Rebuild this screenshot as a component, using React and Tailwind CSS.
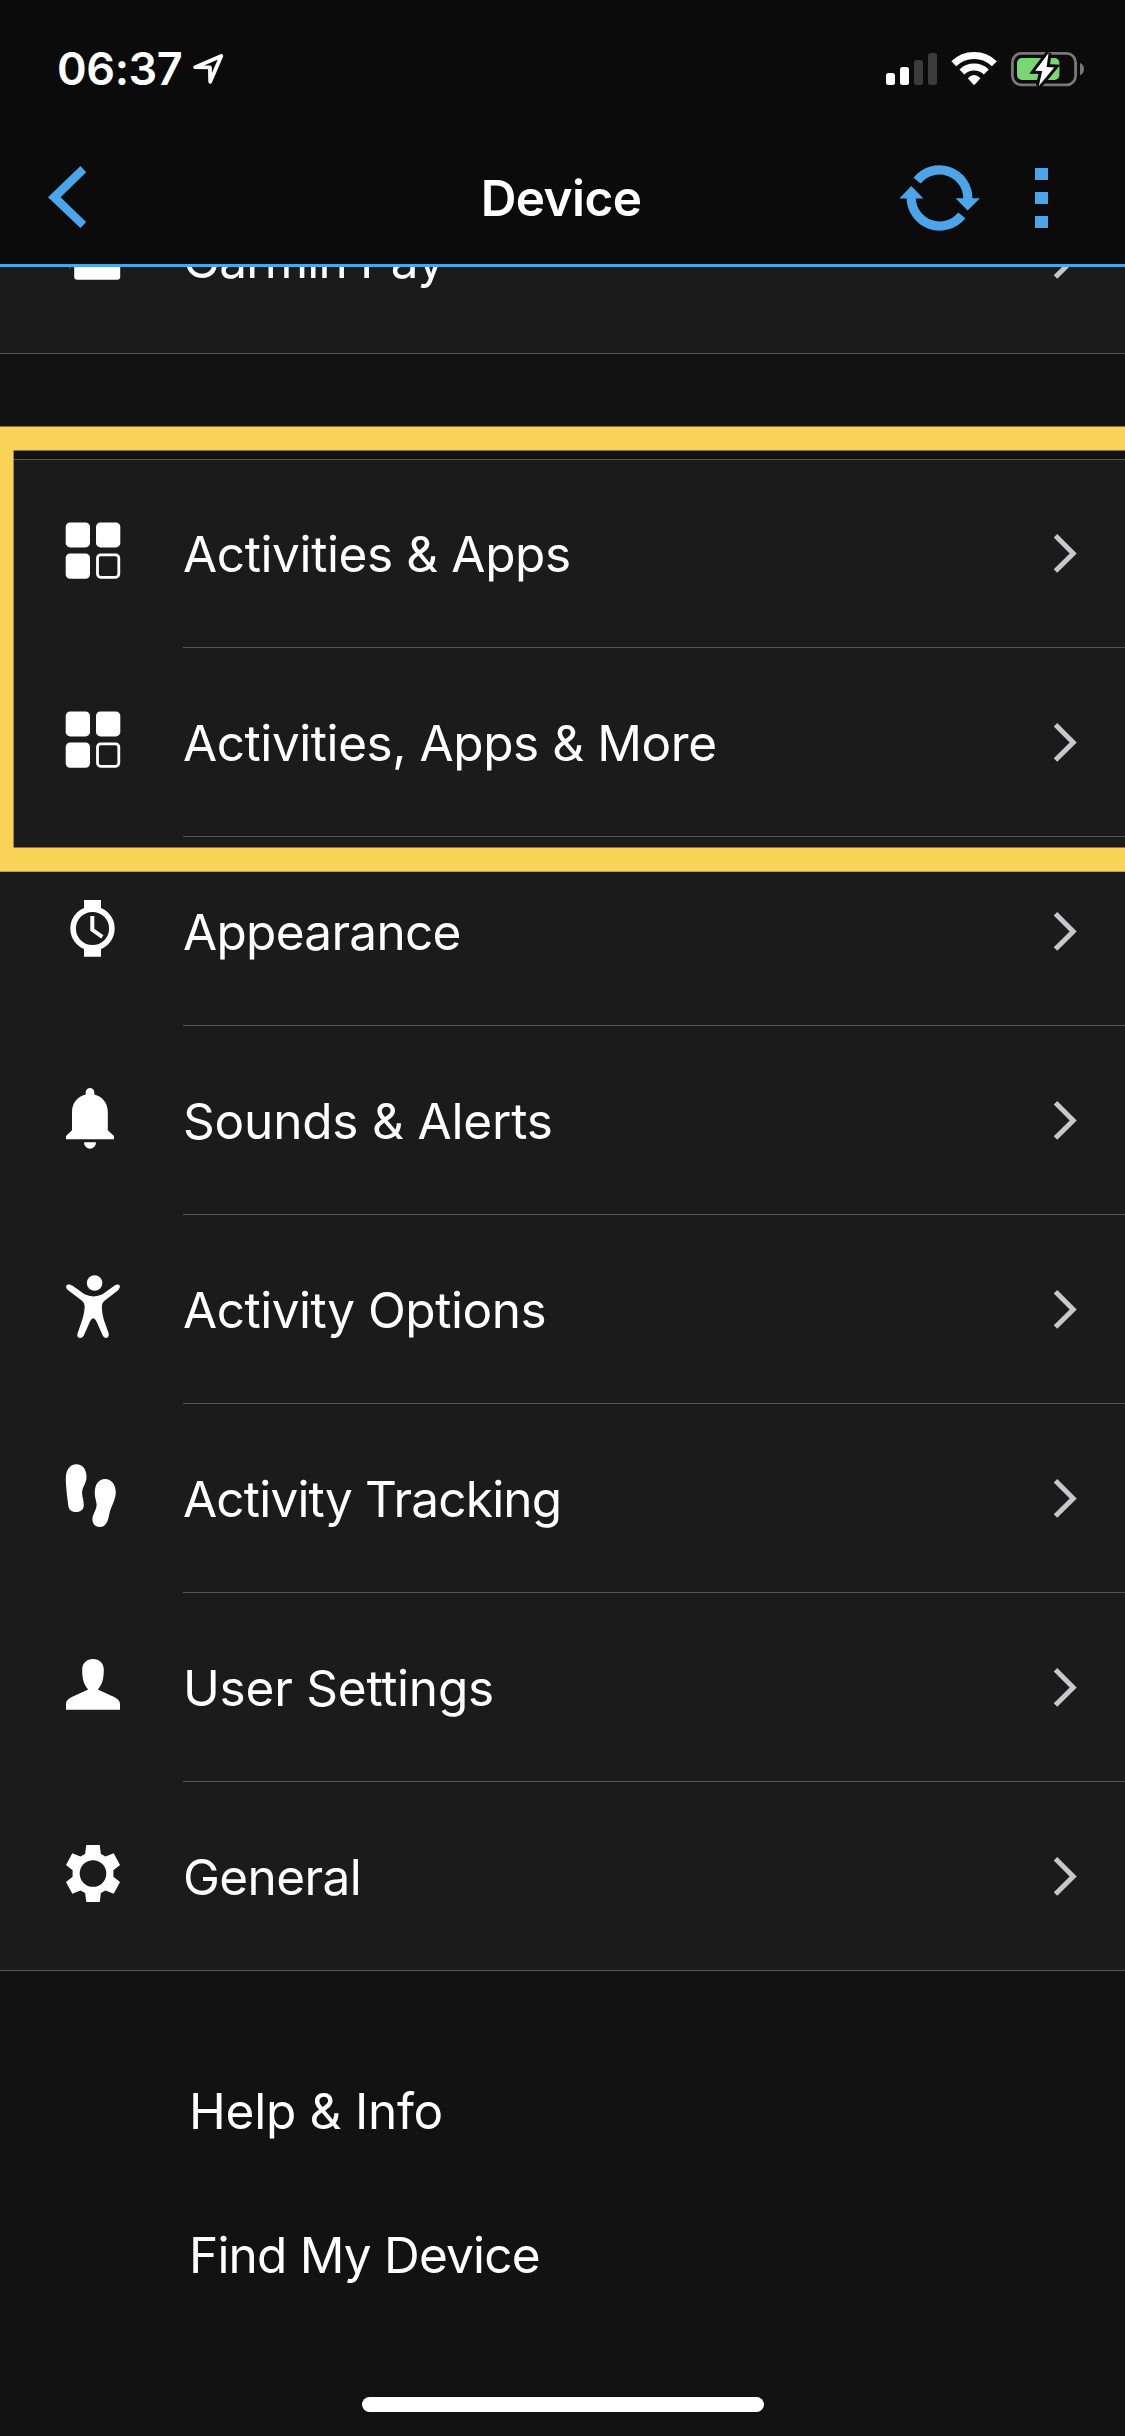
const GridIcon = () => (
  <svg viewBox="60 520 66 66" className="w-[66px] h-[66px] overflow-visible" fill="white">
    <rect x="65.7" y="522.4" width="24.3" height="25" rx="4.5" />
    <rect x="96" y="522.4" width="24.3" height="25" rx="4.5" />
    <rect x="65.7" y="553.4" width="24.3" height="25.4" rx="4.5" />
    <rect x="97.5" y="554.9" width="21.3" height="22.4" rx="3.2" fill="none" stroke="white" strokeWidth="2.8" />
  </svg>
)

const WatchIcon = () => (
  <svg viewBox="60 898 66 66" className="w-[66px] h-[66px] overflow-visible" fill="none" stroke="white">
    <path d="M84 900h17v9h-17zM84 948h17v8.7h-17z" fill="white" stroke="none" />
    <circle cx="92.5" cy="928.5" r="19.4" strokeWidth="5.6" />
    <path d="M92.3 916v13.8l10 7" strokeWidth="4" />
  </svg>
)

const BellIcon = () => (
  <svg viewBox="60 1087 66 66" className="w-[66px] h-[66px] overflow-visible" fill="white">
    <path d="M85.7 1094.5V1092.3a4.3 4.3 0 0 1 8.6 0V1094.5C102.5 1096.5 107.8 1103 107.8 1112V1130.2L114 1136V1139.3H66V1136L72 1130.2V1112C72 1103 77.5 1096.5 85.7 1094.5Z" />
    <path d="M84 1142.3h12a6 6.4 0 0 1-12 0Z" />
  </svg>
)

const PersonIcon = () => (
  <svg viewBox="60 1276 66 66" className="w-[66px] h-[66px] overflow-visible" fill="white">
    <circle cx="94.6" cy="1283" r="7.8" />
    <path d="M67 1285C68.5 1284 71 1284.6 73 1286L84.5 1294.3Q93.5 1298.6 102.5 1294.3L114 1286C116 1284.6 118.4 1284 119.5 1285.3C120.6 1287 119.2 1289.2 117.5 1290.8L104.5 1300.8Q101.6 1303.2 101.8 1306C102 1314 103.5 1319 105 1323L108.5 1333C109.3 1336 108 1337.9 106.2 1337.9C104.5 1337.9 103.3 1336.6 102.5 1335L96.5 1321.5Q93.2 1314.8 90 1321.5L84 1335C83 1337 82 1337.9 80 1337.9C77.6 1337.9 76.8 1335.5 77.7 1333L81.5 1322C83.2 1317 84.5 1312 84.7 1306Q84.7 1303.2 82 1300.8L68.5 1290.5C66.5 1289 65 1286.7 67 1285Z" />
  </svg>
)

const StepsIcon = () => (
  <svg viewBox="60 1465 66 66" className="w-[66px] h-[66px] overflow-visible" fill="white">
    <path d="M76.5 1464.3C82.5 1464.3 86.8 1469.5 86.5 1477.5C86.2 1484 82 1487 82.1 1493C82.2 1497 83.8 1500.5 83.8 1505C83.8 1509.5 80.8 1512 76 1512C71 1512 68.6 1509.5 68.2 1505C67.4 1497 66 1490 65.8 1479C65.7 1470 70 1464.3 76.5 1464.3Z" />
    <path d="M105 1479C111.5 1479 116 1485 115.8 1493C115.3 1500.5 110.8 1507 109.3 1514C108.3 1520 106.4 1527 99.9 1527C95 1527 92.3 1523.5 92.4 1519C92.6 1514 96.6 1510 96.6 1505C96.6 1501 94.6 1498 94.8 1492C95 1484 99 1479 105 1479Z" />
  </svg>
)

const UserIcon = () => (
  <svg viewBox="60 1654 66 66" className="w-[66px] h-[66px] overflow-visible" fill="white">
    <path d="M93 1659C99.5 1659 103.8 1663 103.8 1670C103.8 1679 102 1685 97.8 1689.6L112 1696C117 1698.3 120 1700.5 120 1704V1709.8H66V1704C66 1700.5 69 1698.3 74 1696L88.2 1689.6C84 1685 82.2 1679 82.2 1670C82.2 1663 86.5 1659 93 1659Z" />
  </svg>
)

const GearIcon = () => (
  <svg viewBox="60 1843 66 66" className="w-[66px] h-[66px] overflow-visible" fill="white">
    <path
      fillRule="evenodd"
      d="M86.3 1845H99.7L100.9 1854L105.5 1856.6L113.7 1853.3L120 1865L113.4 1870.3V1876.7L120 1882L113.7 1893.7L105.5 1890.4L100.9 1893L99.7 1902H86.3L85.1 1893L80.5 1890.4L72.3 1893.7L66 1882L72.6 1876.7V1870.3L66 1865L72.3 1853.3L80.5 1856.6L85.1 1854ZM93 1860.2a13.3 13.3 0 1 0 0 26.6a13.3 13.3 0 1 0 0-26.6Z"
    />
  </svg>
)

const CardIcon = () => (
  <svg viewBox="60 226 66 66" className="w-[66px] h-[66px] overflow-visible" fill="white">
    <rect x="74.2" y="240" width="46" height="39.8" rx="3" />
    <path d="M68.6 264l1.6 4.5M71.2 264l1 3.5" stroke="#777" strokeWidth="1" />
  </svg>
)

const Chevron = () => (
  <svg viewBox="1052 531 28 44" className="w-[28px] h-[44px]" fill="none" stroke="#c7c7cc" strokeWidth="5">
    <path d="M1055.5 535.8L1073.2 553.4L1055.5 571" />
  </svg>
)

const items = [
  { label: 'Activities & Apps', icon: GridIcon, tracking: 'tracking-[-0.38px]' },
  { label: 'Activities, Apps & More', icon: GridIcon, tracking: 'tracking-[-0.43px]' },
  { label: 'Appearance', icon: WatchIcon, tracking: 'tracking-[-0.7px]' },
  { label: 'Sounds & Alerts', icon: BellIcon, tracking: 'tracking-[-0.18px]' },
  { label: 'Activity Options', icon: PersonIcon, tracking: 'tracking-[-0.48px]' },
  { label: 'Activity Tracking', icon: StepsIcon, tracking: 'tracking-[-0.8px]' },
  { label: 'User Settings', icon: UserIcon, tracking: 'tracking-[-0.23px]' },
  { label: 'General', icon: GearIcon, tracking: 'tracking-[-0.6px]' },
]

function Row({ label, icon: Icon, tracking, last }) {
  return (
    <div className={`flex items-center h-[189px] shrink-0 pl-[60px] ${last ? 'border-b border-[#555555]' : ''}`}>
      <div className={last ? '' : 'mb-px'}><Icon /></div>
      <div className={`ml-[57px] h-full flex-1 flex items-center justify-between pr-[45px] ${last ? '' : 'border-b border-[#555555]'}`}>
        <span className={`pt-[2px] text-[49.5px] leading-[60px] whitespace-nowrap ${tracking}`}>{label}</span>
        <Chevron />
      </div>
    </div>
  )
}

function StatusBar() {
  return (
    <div className="h-[132px] flex items-start justify-between pl-[57px] pr-[39px]">
      <div className="flex items-start">
        <span className="mt-[41px] w-[128px] text-[45px] leading-[56px] font-semibold tracking-[-0.4px]">06:37</span>
        <svg viewBox="190 50 36 38" className="w-[36px] h-[38px] mt-[50px] ml-[5px]" fill="none" stroke="white" strokeWidth="3.8" strokeLinejoin="round">
          <path d="M195.2 67.2L221.3 55.9L210.2 81.7L209.9 67.4Z" />
        </svg>
      </div>
      <svg viewBox="884 48 202 42" className="w-[202px] h-[42px] mt-[48px]" fill="white">
        <rect x="886" y="73" width="9" height="12" rx="2.5" />
        <rect x="900" y="67" width="9" height="18" rx="2.5" />
        <rect x="914" y="60" width="9" height="25" rx="2.5" fill="#3b3b3b" />
        <rect x="928" y="53" width="9" height="32" rx="2.5" fill="#3b3b3b" />
        <g fill="none" stroke="white" strokeWidth="7">
          <path d="M953.8 63.8A29 29 0 0 1 994.4 63.8" />
          <path d="M961.9 72.1A17.4 17.4 0 0 1 986.3 72.1" />
        </g>
        <path d="M967.8 78.2Q974.1 72 980.4 78.2L974.9 84.4Q974.1 85.2 973.3 84.4Z" />
        <rect x="1012.4" y="53.4" width="63.2" height="31.4" rx="9" fill="none" stroke="#787878" strokeWidth="2.8" />
        <path d="M1080 63Q1084 64.5 1084 69T1080 75.2Z" fill="#787878" />
        <rect x="1017" y="58" width="42.4" height="22" rx="5" fill="#77d872" />
        <path d="M1048.6 53L1035.2 70.8L1042.2 71L1038.8 86L1054.2 67.4L1046.6 67Z" stroke="#0b0b0b" strokeWidth="6" />
        <path d="M1048.6 53L1035.2 70.8L1042.2 71L1038.8 86L1054.2 67.4L1046.6 67Z" />
      </svg>
    </div>
  )
}

function NavBar() {
  return (
    <div className="h-[132px] flex items-center justify-between pl-[48px] pr-[77px]">
      <svg viewBox="48 165 39 66" className="w-[39px] h-[66px]" fill="#4ca5e9">
        <path d="M48 197.2L80.4 166L86.2 172.2L60.6 197.2L86.2 222L80.4 228Z" />
      </svg>
      <h1 className="ml-[136px] text-[49.5px] leading-[60px] font-semibold tracking-[-0.6px] pb-[1px]">Device</h1>
      <div className="flex items-center">
        <svg viewBox="899 164 82 68" className="w-[82px] h-[68px]" fill="none" stroke="#4ca5e9" strokeWidth="9.2">
          <path d="M917.1 180.7A28.4 28.4 0 0 1 967.8 199" />
          <path d="M961.8 215.3A28.4 28.4 0 0 1 911.2 197" />
          <path d="M955.6 198.2H980L967.6 210.4ZM899.3 198.4L911.3 186L923.4 198.4Z" fill="#4ca5e9" stroke="none" />
        </svg>
        <div className="ml-[54px] flex flex-col gap-[12px]">
          <div className="w-[13px] h-[12px] bg-[#4ca5e9]" />
          <div className="w-[13px] h-[12px] bg-[#4ca5e9]" />
          <div className="w-[13px] h-[12px] bg-[#4ca5e9]" />
        </div>
      </div>
    </div>
  )
}

export default function App() {
  return (
    <div className="relative w-[1125px] h-[2436px] overflow-hidden flex flex-col bg-[#121212] text-white font-['Inter',sans-serif]">
      <header className="h-[267px] shrink-0 bg-[#0b0b0b] border-b-[3px] border-[#4ca5e9]">
        <StatusBar />
        <NavBar />
      </header>

      {/* row scrolled partly under the header */}
      <div className="h-[87px] shrink-0 overflow-hidden flex flex-col justify-end bg-[#1b1b1b]">
        <Row label="Garmin Pay" icon={CardIcon} tracking="tracking-[-0.8px]" last />
      </div>

      <section className="mt-[105px] bg-[#1b1b1b] shadow-[inset_0_1px_0_#555555]">
        {items.map((item, i) => (
          <Row key={item.label} {...item} last={i === items.length - 1} />
        ))}
      </section>

      <nav className="pt-[68px] pl-[189px] flex flex-col text-[49.5px] leading-[144px]">
        <a className="tracking-[-0.25px]">Help &amp; Info</a>
        <a className="tracking-[-0.8px]">Find My Device</a>
      </nav>

      <div className="mt-auto mb-[24px] mx-auto w-[402px] h-[15px] rounded-full bg-white" />

      {/* highlight frame, runs off the right edge */}
      <svg viewBox="0 426 1125 446" className="absolute left-0 top-[426px] w-[1125px] h-[446px]" fill="#f9d355">
        <path d="M0 426.5H1125V450.6H13.6V847.4H1125V871.8H0Z" />
      </svg>
    </div>
  )
}
